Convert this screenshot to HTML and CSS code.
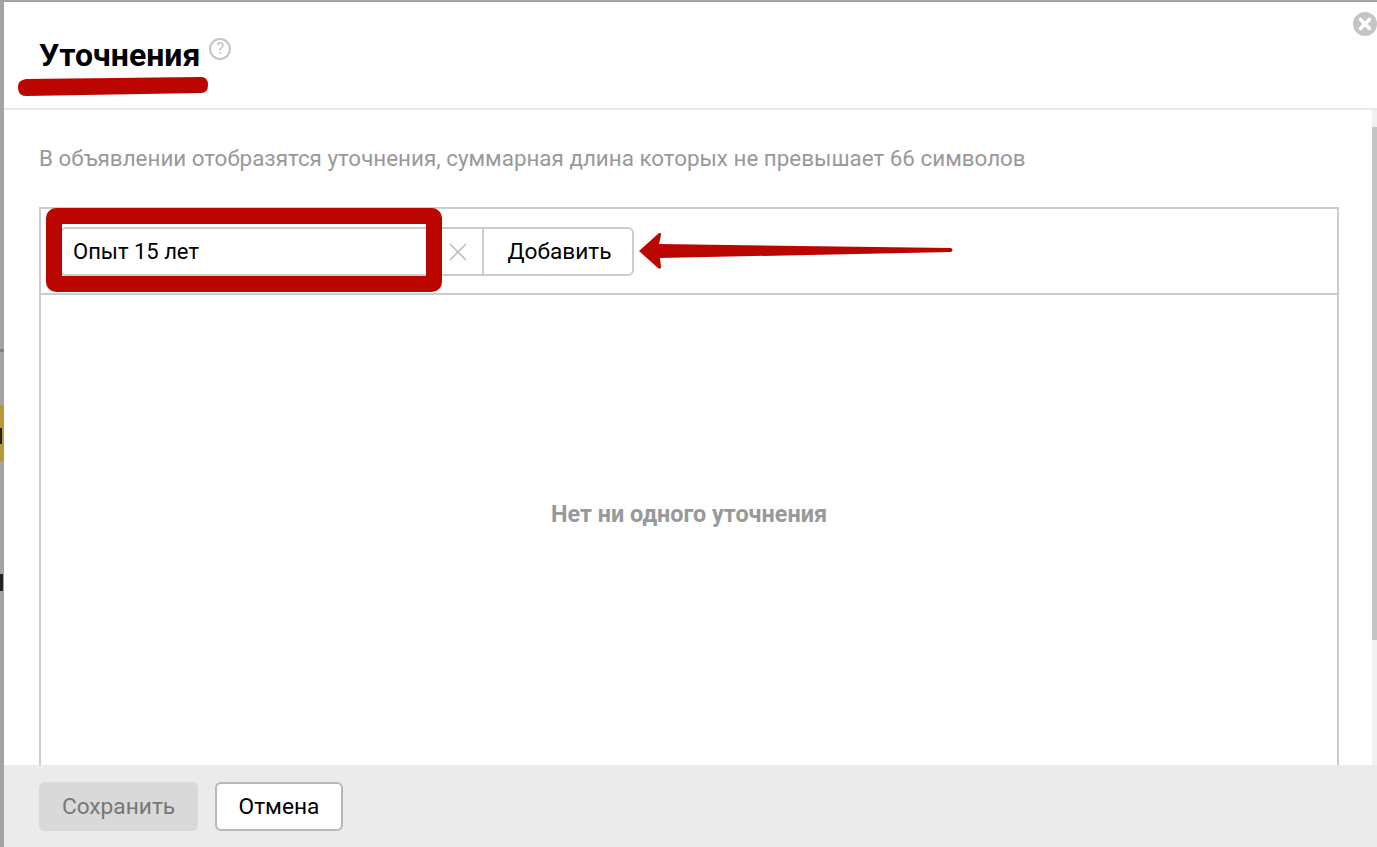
FILE: index.html
```html
<!DOCTYPE html>
<html lang="ru">
<head>
<meta charset="utf-8">
<title>Уточнения</title>
<link rel="stylesheet" href="styles.css">
</head>
<body>
<div class="page">
  <div class="backdrop-line"></div>
  <div class="backdrop-yellow"></div>
  <div class="backdrop-mark mark-a"></div>
  <div class="backdrop-mark mark-b"></div>
  <main class="modal">
    <header class="modal-head">
      <h1 class="title">Уточнения</h1>
      <span class="help">?</span>
    </header>
    <section class="modal-body">
      <p class="hint">В объявлении отобразятся уточнения, суммарная длина которых не превышает 66 символов</p>
      <div class="panel">
        <div class="toolbar">
          <div class="field">
            <span class="field-text">Опыт 15 лет</span>
            <svg class="clear" width="18" height="18" viewBox="0 0 18 18"><path d="M1 1l16 16M17 1L1 17" stroke="#bdbdbd" stroke-width="1.6" fill="none"/></svg>
          </div>
          <button class="btn btn-add">Добавить</button>
        </div>
        <div class="empty">Нет ни одного уточнения</div>
      </div>
      <div class="scrollbar"><div class="thumb"></div></div>
    </section>
    <footer class="modal-foot">
      <button class="btn btn-disabled">Сохранить</button>
      <button class="btn btn-cancel">Отмена</button>
    </footer>
  </main>
  <svg class="close" width="24" height="24" viewBox="0 0 24 24"><circle cx="12" cy="12" r="12" fill="#c4c4c4"/><path d="M7.5 7.5l9 9M16.5 7.5l-9 9" stroke="#fff" stroke-width="3.6" stroke-linecap="round"/></svg>
  <svg class="ink" width="1377" height="847" viewBox="0 0 1377 847">
    <path d="M26 79L201 77Q208 77 208 85Q208 93 201 93L26 96Q18 96 18 87Q18 80 26 79Z" fill="#bb0600"/>
    <rect x="54" y="216" width="380" height="68" rx="2" fill="none" stroke="#bb0600" stroke-width="16"/>
    <path d="M639 251L659 233Q661 232 661 235L659 244L951 248Q954 250 951 252L660 258L661 267Q661 270 658 268Z" fill="#bb0600"/>
  </svg>
</div>
</body>
</html>
```

FILE: styles.css
```css
* { box-sizing: border-box; }
html, body { margin: 0; padding: 0; height: 100%; overflow: hidden; }
body { font-family: Roboto, "Noto Sans", "Liberation Sans", sans-serif; color: #000; }

.page {
  position: relative;
  width: 1377px;
  height: 847px;
  padding: 2px 0 0 4px;
  background: #a3a3a3;
  overflow: hidden;
}
.backdrop-line { position: absolute; left: 0; top: 349px; width: 4px; height: 3px; background: #7f7f7f; }
.backdrop-yellow { position: absolute; left: 0; top: 405px; width: 4px; height: 56px; background: #b89a3c; }
.backdrop-mark { position: absolute; left: 0; width: 4px; background: #222; }
.mark-a { top: 428px; height: 16px; width: 2px; }
.mark-b { top: 574px; height: 17px; width: 3px; }

.modal {
  display: flex;
  flex-direction: column;
  height: 845px;
  background: #fff;
}
.modal-head {
  flex: none;
  display: flex;
  align-items: flex-start;
  height: 108px;
  padding: 33px 0 0 35px;
  border-bottom: 2px solid #e8e8e8;
}
.title {
  margin: 0;
  font-size: 32px;
  line-height: 40px;
  font-weight: 700;
}
.help {
  width: 22px;
  height: 22px;
  margin: 3px 0 0 9px;
  border: 2px solid #c4c4c4;
  border-radius: 50%;
  color: #bdbdbd;
  font-size: 16px;
  line-height: 18px;
  text-align: center;
}
.modal-body {
  position: relative;
  flex: 1;
  min-height: 0;
  padding: 0 38px 0 35px;
  overflow: hidden;
}
.hint {
  margin: 35px 0 36px;
  font-size: 22.4px;
  line-height: 26px;
  color: #999;
}
.panel { border: 2px solid #cccccc; height: 600px; }
.toolbar {
  display: flex;
  height: 86px;
  padding: 18px 0 0 19px;
  border-bottom: 2px solid #cccccc;
}
.field {
  display: flex;
  align-items: center;
  justify-content: space-between;
  width: 422px;
  height: 49px;
  padding: 0 15px 0 11px;
  border: 2px solid #cccccc;
  border-right: 0;
  border-radius: 6px 0 0 6px;
  font-size: 22px;
}
.clear { flex: none; }
.btn {
  height: 49px;
  font-family: inherit;
  font-size: 22.7px;
  color: #000;
  background: #fff;
  border: 2px solid #cccccc;
  border-radius: 6px;
  padding: 0;
}
.btn-add { width: 152px; padding-left: 3px; border-radius: 0 6px 6px 0; }
.empty {
  padding-top: 205px;
  text-align: center;
  font-size: 23.4px;
  line-height: 28px;
  font-weight: 700;
  color: #999;
}
.scrollbar {
  position: absolute;
  right: 0;
  top: 0;
  bottom: 0;
  width: 5px;
  padding-top: 17px;
  background: #f0f0f0;
}
.thumb { height: 513px; background: #c4c4c4; }
.modal-foot {
  position: relative;
  flex: none;
  display: flex;
  gap: 17px;
  height: 82px;
  padding: 17px 0 0 35px;
  background: #ebebeb;
}
.btn-disabled { width: 159px; background: #d9d9d9; border-color: #d9d9d9; color: #777; }
.btn-cancel { width: 128px; border-color: #b8b8b8; }
.close { position: absolute; left: 1353px; top: 12px; }
.ink { position: absolute; left: 0; top: 0; pointer-events: none; }
```
